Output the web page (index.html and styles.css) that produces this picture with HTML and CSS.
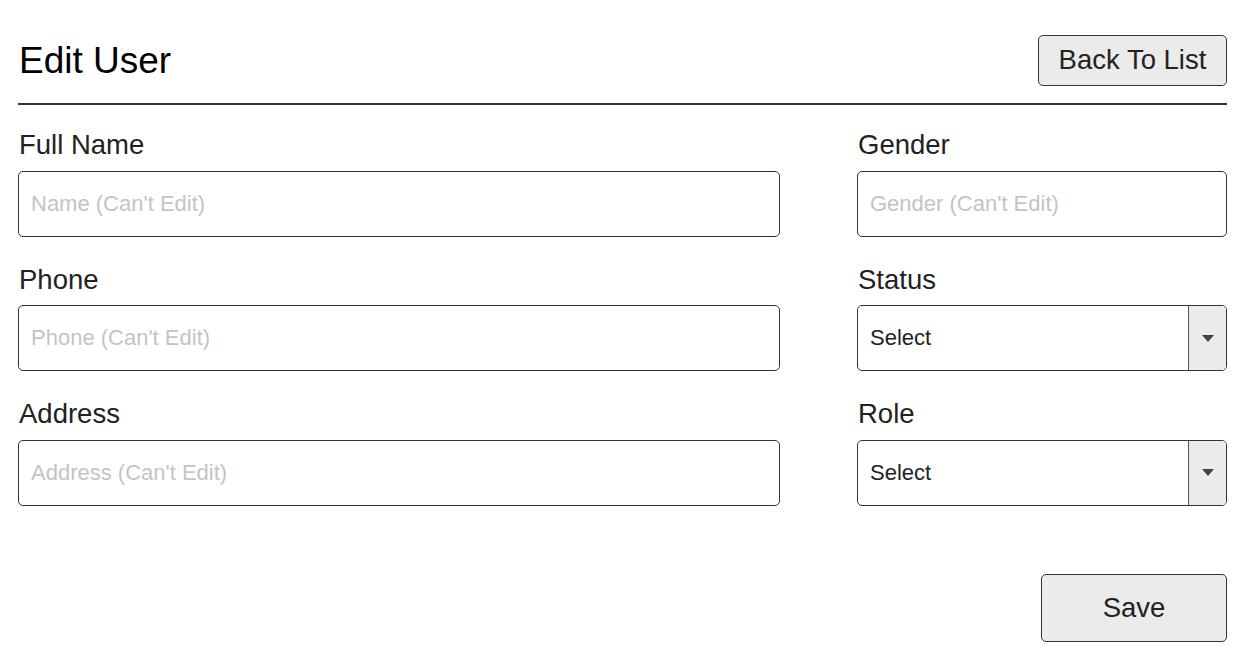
FILE: index.html
```html
<!DOCTYPE html>
<html lang="en">
<head>
<meta charset="utf-8">
<title>Edit User</title>
<link rel="stylesheet" href="styles.css">
</head>
<body>
<div class="page">
  <header class="header">
    <h1 class="title">Edit User</h1>
    <button class="btn btn-back" type="button">Back To List</button>
  </header>
  <hr class="rule">
  <form class="form">
    <div class="grid">
      <div class="field">
        <label class="label">Full Name</label>
        <div class="input"><span class="placeholder">Name (Can't Edit)</span></div>
      </div>
      <div class="field">
        <label class="label">Gender</label>
        <div class="input"><span class="placeholder">Gender (Can't Edit)</span></div>
      </div>
      <div class="field">
        <label class="label">Phone</label>
        <div class="input"><span class="placeholder">Phone (Can't Edit)</span></div>
      </div>
      <div class="field">
        <label class="label">Status</label>
        <div class="select">
          <span class="select-value">Select</span>
          <span class="select-arrow"><span class="caret"></span></span>
        </div>
      </div>
      <div class="field">
        <label class="label">Address</label>
        <div class="input"><span class="placeholder">Address (Can't Edit)</span></div>
      </div>
      <div class="field">
        <label class="label">Role</label>
        <div class="select">
          <span class="select-value">Select</span>
          <span class="select-arrow"><span class="caret"></span></span>
        </div>
      </div>
    </div>
    <div class="actions">
      <button class="btn btn-save" type="button">Save</button>
    </div>
  </form>
</div>
</body>
</html>
```

FILE: styles.css
```css
* {
  box-sizing: border-box;
}

html, body {
  margin: 0;
  padding: 0;
  background: #ffffff;
}

body {
  font-family: Arial, "Liberation Sans", sans-serif;
  color: #222222;
}

.page {
  padding: 35px 19px 0 18px;
}

.header {
  display: flex;
  align-items: center;
  justify-content: space-between;
  height: 51px;
}

.title {
  margin: 2px 0 0 1px;
  font-size: 37px;
  font-weight: 400;
  line-height: 1.15;
  color: #000000;
}

.btn {
  font-family: Arial, "Liberation Sans", sans-serif;
  font-size: 27.5px;
  color: #222222;
  background: #ebebeb;
  border: 1.5px solid #333333;
  border-radius: 5px;
  padding: 0;
  cursor: pointer;
}

.btn-back {
  width: 189px;
  height: 51px;
  padding-bottom: 2px;
}

.rule {
  margin: 17px 0 0 0;
  border: 0;
  border-top: 2px solid #333333;
  height: 0;
}

.form {
  padding-top: 24px;
}

.grid {
  display: grid;
  grid-template-columns: 762px 1fr;
  column-gap: 77px;
}

.field {
  display: flex;
  flex-direction: column;
  margin-bottom: 27px;
}

.label {
  font-size: 27.5px;
  line-height: 1.15;
  margin-bottom: 10px;
  padding-left: 1px;
  color: #222222;
}

.input,
.select {
  height: 66px;
  border: 1.5px solid #333333;
  border-radius: 5px;
  background: #ffffff;
  display: flex;
  align-items: center;
}

.input {
  padding-left: 12px;
}

.placeholder {
  font-size: 22px;
  color: #c4c4c4;
}

.select {
  overflow: hidden;
}

.select-value {
  flex: 1;
  padding-left: 12px;
  font-size: 22px;
  color: #222222;
}

.select-arrow {
  width: 38px;
  height: 100%;
  background: #ebebeb;
  border-left: 1.5px solid #555555;
  display: flex;
  align-items: center;
  justify-content: center;
}

.caret {
  width: 0;
  height: 0;
  border-left: 6px solid transparent;
  border-right: 6px solid transparent;
  border-top: 7px solid #444444;
}

.actions {
  display: flex;
  justify-content: flex-end;
  padding-top: 41px;
}

.btn-save {
  width: 186px;
  height: 68px;
}
```
